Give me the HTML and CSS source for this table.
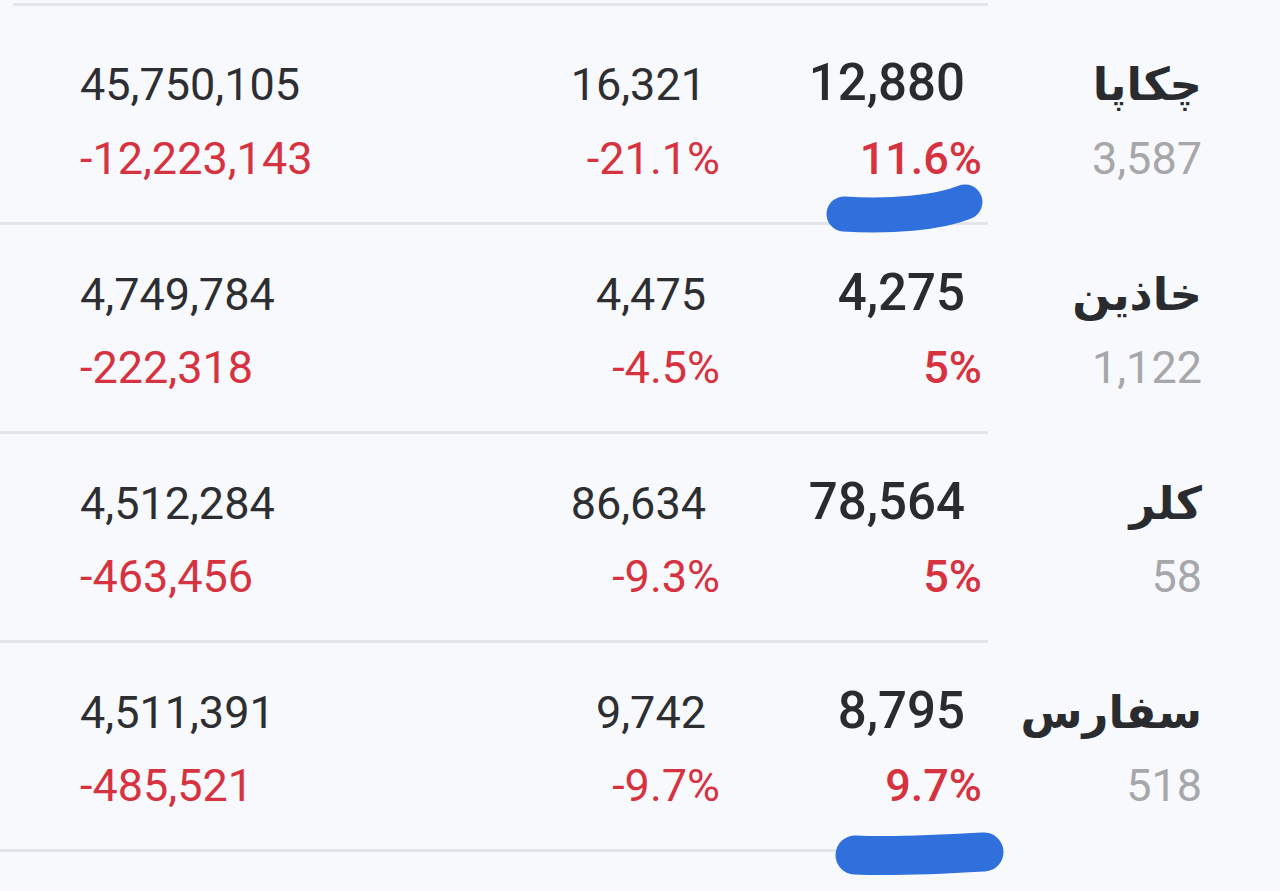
FILE: index.html
```html
<!DOCTYPE html>
<html lang="fa">
<head>
<meta charset="utf-8">
<title>Watchlist</title>
<link rel="stylesheet" href="styles.css">
</head>
<body>
<div class="list">
  <div class="top-rule"></div>

  <div class="row first">
    <span class="c1 top">45,750,105</span>
    <span class="c2 top">16,321</span>
    <span class="c3 top strong">12,880</span>
    <span class="c4 name" dir="rtl">چکاپا</span>
    <span class="c1 neg">-12,223,143</span>
    <span class="c2 neg">-21.1%</span>
    <span class="c3 neg pct">11.6%</span>
    <span class="c4 sub">3,587</span>
    <svg class="marker m1" width="200" height="80" viewBox="0 0 200 80" aria-hidden="true">
      <path d="M44 38 C90 41 138 37 165 26" />
    </svg>
  </div>

  <div class="row">
    <span class="c1 top">4,749,784</span>
    <span class="c2 top">4,475</span>
    <span class="c3 top strong">4,275</span>
    <span class="c4 name" dir="rtl">خاذین</span>
    <span class="c1 neg">-222,318</span>
    <span class="c2 neg">-4.5%</span>
    <span class="c3 neg pct">5%</span>
    <span class="c4 sub">1,122</span>
  </div>

  <div class="row">
    <span class="c1 top">4,512,284</span>
    <span class="c2 top">86,634</span>
    <span class="c3 top strong">78,564</span>
    <span class="c4 name" dir="rtl">کلر</span>
    <span class="c1 neg">-463,456</span>
    <span class="c2 neg">-9.3%</span>
    <span class="c3 neg pct">5%</span>
    <span class="c4 sub">58</span>
  </div>

  <div class="row">
    <span class="c1 top">4,511,391</span>
    <span class="c2 top">9,742</span>
    <span class="c3 top strong">8,795</span>
    <span class="c4 name" dir="rtl">سفارس</span>
    <span class="c1 neg">-485,521</span>
    <span class="c2 neg">-9.7%</span>
    <span class="c3 neg pct">9.7%</span>
    <span class="c4 sub">518</span>
    <svg class="marker m2" width="200" height="70" viewBox="0 0 200 70" aria-hidden="true">
      <path d="M35 35 C80 37 130 34 164 32" />
    </svg>
  </div>
</div>
</body>
</html>
```

FILE: styles.css
```css
html, body {
  margin: 0;
  padding: 0;
}

body {
  background: #f8f9fd;
  font-family: Roboto, "DejaVu Sans", sans-serif;
  color: #2d2e32;
  width: 1280px;
  height: 891px;
  overflow: hidden;
}

.list {
  position: relative;
}

.top-rule {
  margin: 3px 0 0 13px;
  width: 975px;
  height: 3px;
  background: #e4e5ea;
}

.row {
  position: relative;
  display: grid;
  grid-template-columns: 352px 288px 262px 220px;
  grid-template-rows: auto auto;
  row-gap: 13px;
  align-items: baseline;
  padding: 38px 78px 36px 80px;
  background: linear-gradient(#e4e5ea, #e4e5ea) no-repeat left bottom / 988px 3px;
}

.row.first {
  padding-top: 47px;
  padding-bottom: 36px;
  row-gap: 14px;
}

.row > span {
  font-size: 45px;
  line-height: 60px;
  white-space: nowrap;
}

.c1 { grid-column: 1; text-align: left; }
.c2 { grid-column: 2; text-align: right; }
.c3 { grid-column: 3; text-align: right; }
.c4 { grid-column: 4; text-align: right; }

.top { grid-row: 1; color: #2d2e32; }
.c2.top { padding-right: 14px; }
.c3.top { padding-right: 17px; }

.row > .strong {
  font-size: 51px;
  font-weight: 500;
  color: #2a2b2f;
}

.row > .name {
  grid-row: 1;
  font-family: "DejaVu Sans", sans-serif;
  font-size: 45px;
  font-weight: 700;
  color: #2a2b2f;
}

.neg {
  grid-row: 2;
  color: #d6323f;
}

.row > .pct {
  font-weight: 500;
}

.sub {
  grid-row: 2;
  color: #a7a7a9;
}

.marker {
  position: absolute;
  fill: none;
  stroke: #3070dd;
  stroke-linecap: round;
  stroke-linejoin: round;
}

.m1 {
  left: 800px;
  top: 170px;
  stroke-width: 35px;
}

.m2 {
  left: 820px;
  top: 177px;
  stroke-width: 39px;
}
```
